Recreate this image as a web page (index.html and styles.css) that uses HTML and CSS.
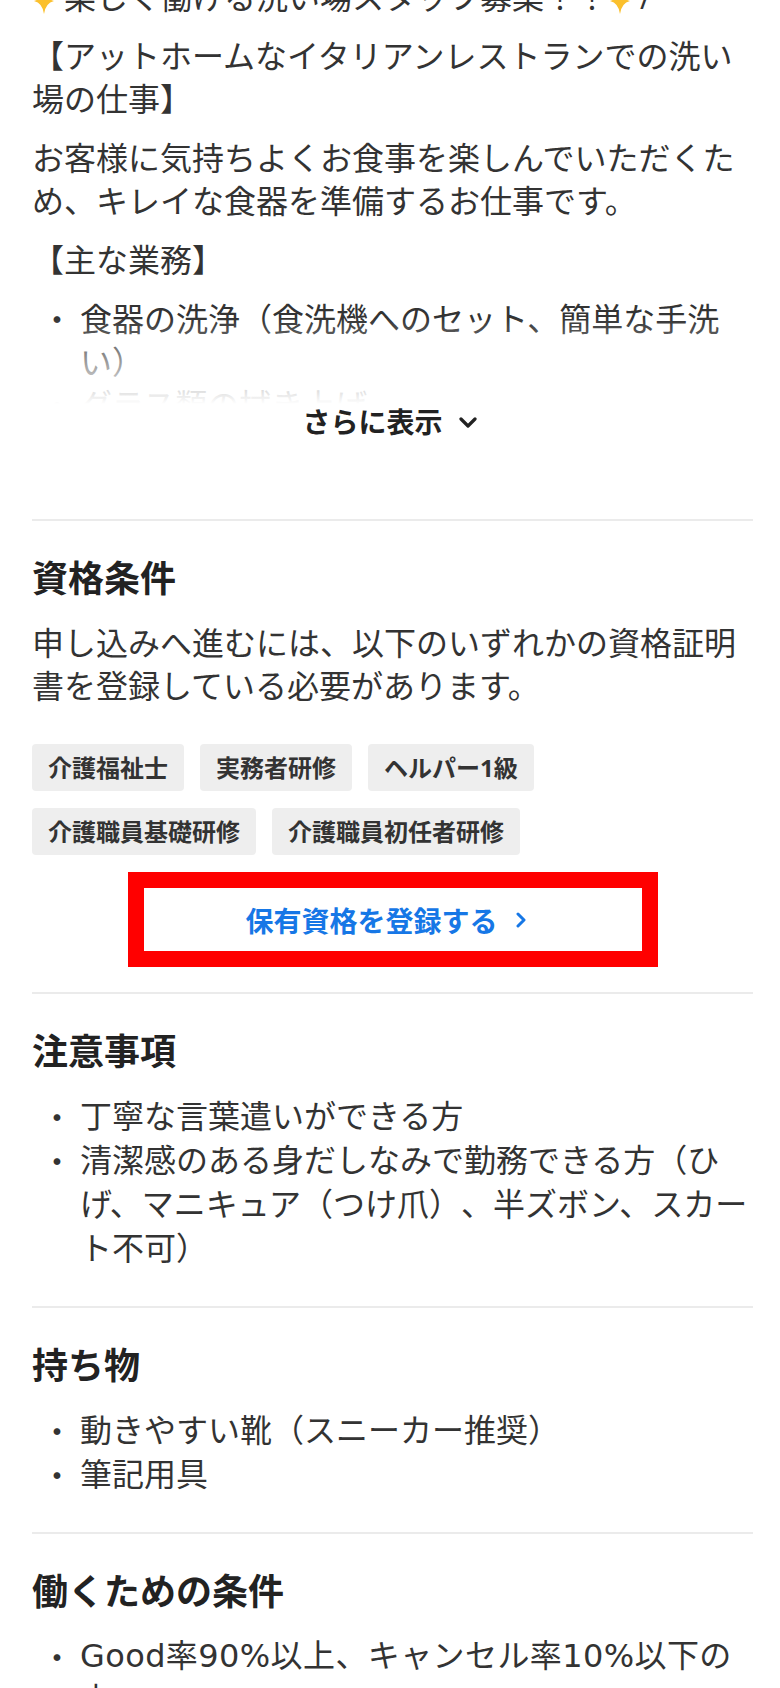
FILE: index.html
```html
<!DOCTYPE html>
<html lang="ja">
<head>
  <meta charset="UTF-8">
  <title>求人詳細</title>
  <link rel="stylesheet" href="styles.css">
</head>
<body>
  <div class="job-detail">

    <section class="description">
      <div class="description-body">
        <p><svg class="sparkle" viewBox="0 0 32 32"><path d="M12 6 Q13.5 17 22 19 Q13.5 21 12 32 Q10.5 21 2 19 Q10.5 17 12 6Z"/><path d="M24 1 Q24.8 6.2 29 7 Q24.8 7.8 24 13 Q23.2 7.8 19 7 Q23.2 6.2 24 1Z"/></svg>楽しく働ける洗い場スタッフ募集！！<svg class="sparkle" viewBox="0 0 32 32"><path d="M12 6 Q13.5 17 22 19 Q13.5 21 12 32 Q10.5 21 2 19 Q10.5 17 12 6Z"/><path d="M24 1 Q24.8 6.2 29 7 Q24.8 7.8 24 13 Q23.2 7.8 19 7 Q23.2 6.2 24 1Z"/></svg>/</p>
        <p>【アットホームなイタリアンレストランでの洗い場の仕事】</p>
        <p>お客様に気持ちよくお食事を楽しんでいただくため、キレイな食器を準備するお仕事です。</p>
        <p>【主な業務】</p>
        <ul>
          <li>食器の洗浄（食洗機へのセット、簡単な手洗い）</li>
          <li>グラス類の拭き上げ</li>
          <li>厨房内の簡単な清掃</li>
        </ul>
      </div>
      <button class="more-btn">さらに表示
        <svg class="chevron-down" viewBox="0 0 18 11"><path d="M2 2l7 7 7-7"/></svg>
      </button>
    </section>

    <section class="block">
      <h2>資格条件</h2>
      <p>申し込みへ進むには、以下のいずれかの資格証明書を登録している必要があります。</p>
      <div class="chips">
        <span class="chip">介護福祉士</span>
        <span class="chip">実務者研修</span>
        <span class="chip">ヘルパー1級</span>
        <span class="chip">介護職員基礎研修</span>
        <span class="chip">介護職員初任者研修</span>
      </div>
      <button class="register-btn">保有資格を登録する
        <svg class="chevron-right" viewBox="0 0 10 16"><path d="M2 2l6 6-6 6"/></svg>
      </button>
    </section>

    <section class="block">
      <h2>注意事項</h2>
      <ul>
        <li>丁寧な言葉遣いができる方</li>
        <li>清潔感のある身だしなみで勤務できる方（ひげ、マニキュア（つけ爪）、半ズボン、スカート不可）</li>
      </ul>
    </section>

    <section class="block">
      <h2>持ち物</h2>
      <ul>
        <li>動きやすい靴（スニーカー推奨）</li>
        <li>筆記用具</li>
      </ul>
    </section>

    <section class="block conditions">
      <h2>働くための条件</h2>
      <ul>
        <li>Good率90%以上、キャンセル率10%以下の方</li>
      </ul>
    </section>

  </div>
</body>
</html>
```

FILE: styles.css
```css
* { box-sizing: border-box; }
body {
  margin: 0;
  background: #fff;
  color: #333;
  font-family: "Open Sans", "Noto Sans CJK JP", sans-serif;
  font-size: 32px;
  line-height: 43px;
  text-spacing-trim: space-all;
}
p { margin: 0; }
ul { list-style: none; margin: 0; padding: 0; }
li { display: flex; }
li::before {
  content: "・";
  flex: none;
  box-sizing: border-box;
  width: 48px;
  padding-left: 9px;
  font-family: "Noto Sans CJK JP", sans-serif;
}

.job-detail { padding: 0 27px 0 32px; }

/* description (collapsed) */
.description { margin-top: -25px; padding-bottom: 79px; }
.description-body {
  position: relative;
  max-height: 429px;
  overflow: hidden;
}
.description-body p,
.description-body ul { margin-bottom: 16px; }
.description-body::after {
  content: "";
  position: absolute;
  left: 0;
  right: 0;
  bottom: 0;
  height: 86px;
  background: linear-gradient(rgba(255, 255, 255, 0), #fff);
}
.sparkle { width: 32px; height: 32px; vertical-align: -5px; fill: #fbc02d; }

.more-btn {
  display: flex;
  align-items: center;
  justify-content: center;
  gap: 16px;
  width: 100%;
  height: 36px;
  padding: 0 6px 0 0;
  border: 0;
  background: none;
  font-family: inherit;
  font-size: 28px;
  font-weight: bold;
  line-height: 36px;
  color: #222;
}
.chevron-down { width: 18px; height: 11px; fill: none; stroke: #222; stroke-width: 3.2; stroke-linecap: round; stroke-linejoin: round; }

/* sections */
.block { border-top: 2px solid #ebebeb; padding: 34px 0 36px; }
.block h2 { margin: 0 0 18px; font-size: 36px; line-height: 48px; font-weight: bold; color: #222; }
.block li { line-height: 44px; }
.conditions li { font-family: "DejaVu Sans", "Noto Sans CJK JP", sans-serif; letter-spacing: 0.4px; }

.chips { display: flex; flex-wrap: wrap; gap: 17px 16px; margin-top: 37px; }
.chip {
  padding: 10px 16px;
  background: #eeeeee;
  border-radius: 4px;
  font-size: 24px;
  line-height: 27px;
  font-weight: bold;
  color: #333;
}

.register-btn {
  display: flex;
  align-items: center;
  justify-content: center;
  gap: 18px;
  width: 498px;
  height: 63px;
  margin: 33px auto 5px;
  padding: 0 14px 0 0;
  border: 0;
  background: #fff;
  outline: 16px solid #ff0000;
  font-family: inherit;
  font-size: 28px;
  font-weight: bold;
  color: #1677e6;
}
.chevron-right { width: 10px; height: 16px; fill: none; stroke: #1677e6; stroke-width: 3; stroke-linecap: round; stroke-linejoin: round; }
```
